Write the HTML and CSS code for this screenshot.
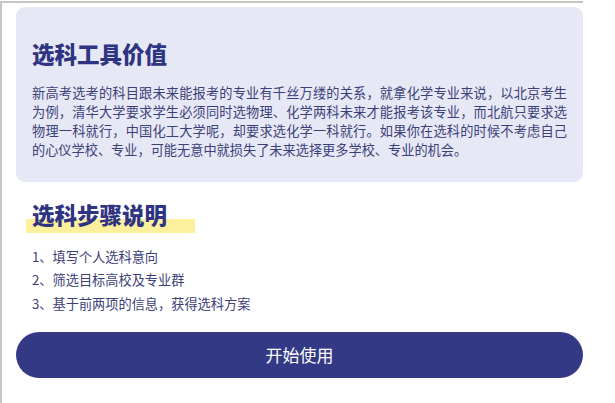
FILE: index.html
```html
<!DOCTYPE html>
<html lang="zh-CN">
<head>
<meta charset="utf-8">
<title>选科工具</title>
<link rel="stylesheet" href="styles.css">
</head>
<body>
<div class="frame">
  <section class="card">
    <h1 class="card-title">选科工具价值</h1>
    <p class="card-text">新高考选考的科目跟未来能报考的专业有千丝万缕的关系，就拿化学专业来说，以北京考生为例，清华大学要求学生必须同时选物理、化学两科未来才能报考该专业，而北航只要求选物理一科就行，中国化工大学呢，却要求选化学一科就行。如果你在选科的时候不考虑自己的心仪学校、专业，可能无意中就损失了未来选择更多学校、专业的机会。</p>
  </section>
  <h2 class="steps-title">选科步骤说明</h2>
  <ol class="steps">
    <li>1、填写个人选科意向</li>
    <li>2、筛选目标高校及专业群</li>
    <li>3、基于前两项的信息，获得选科方案</li>
  </ol>
  <button class="start-btn" type="button">开始使用</button>
</div>
</body>
</html>
```

FILE: styles.css
```css
html, body {
  margin: 0;
  padding: 0;
  background: #ffffff;
}
body {
  font-family: "Noto Sans CJK SC", "Noto Sans", sans-serif;
}
.frame {
  margin-top: 1px;
  border-top: 2px solid #c6c6c6;
  border-left: 2px solid #c6c6c6;
  padding: 4px 0 0 14px;
  width: 567px;
  min-height: 396px;
  box-sizing: content-box;
}
.card {
  background: #e6e8f5;
  border-radius: 9px;
  padding: 31px 16px 23px 16px;
}
.card-title {
  margin: 0;
  font-size: 22.5px;
  line-height: 30px;
  font-weight: 800;
  color: #2f3482;
}
.card-text {
  margin: 15px 0 0 0;
  font-size: 13.2px;
  line-height: 19px;
  color: #3c4078;
  text-align: justify;
}
.steps-title {
  display: inline-block;
  margin: 17px 0 0 10px;
  padding: 0 28px 4px 6px;
  font-size: 22.5px;
  line-height: 30px;
  font-weight: 800;
  color: #2f3482;
  background: linear-gradient(to bottom, transparent 20px, #fcf09c 20px);
}
.steps {
  list-style: none;
  margin: 12px 0 0 0;
  padding: 0 0 0 16px;
  font-size: 13.2px;
  line-height: 23.4px;
  color: #3c4078;
}
.start-btn {
  display: block;
  width: 567px;
  height: 46px;
  margin-top: 17px;
  border: none;
  border-radius: 23px;
  background: #343985;
  color: #ffffff;
  font-family: "Noto Sans CJK SC", "Noto Sans", sans-serif;
  font-size: 17px;
  line-height: 46px;
  padding: 0;
  text-align: center;
}
```
